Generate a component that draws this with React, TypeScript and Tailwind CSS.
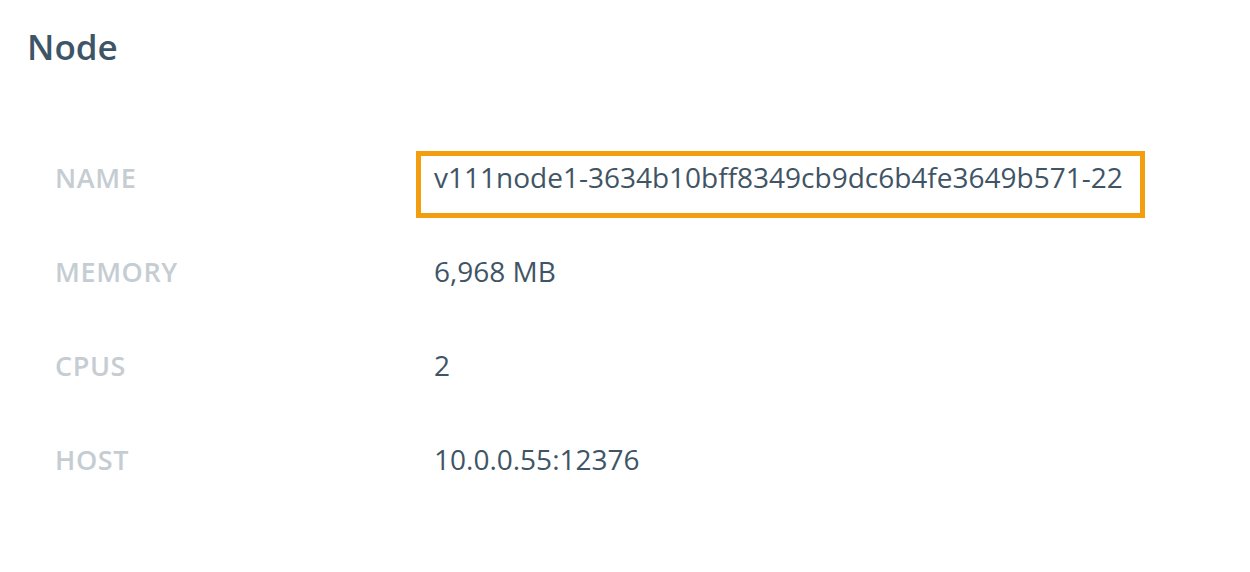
export default function App() {
  const rows = [
    { label: 'NAME', value: 'v111node1-3634b10bff8349cb9dc6b4fe3649b571-22', highlight: true },
    { label: 'MEMORY', value: '6,968 MB' },
    { label: 'CPUS', value: '2' },
    { label: 'HOST', value: '10.0.0.55:12376' },
  ];

  return (
    <div className="w-[1250px] h-[572px] bg-white overflow-hidden" style={{ fontFamily: '"Open Sans", "Liberation Sans", sans-serif' }}>
      <h1 className="pl-[27px] pt-[23px] text-[35px] leading-[48px] font-semibold text-[#3e5567]">Node</h1>
      <div className="mt-[80px] flex flex-col">
        {rows.map((row) => (
          <div key={row.label} className="h-[94px] flex items-start">
            <div className="w-[416px] pl-[55px] pt-[7px] text-[27px] leading-[40px] font-semibold tracking-[0.6px] text-[#c5cdd2]">
              {row.label}
            </div>
            {row.highlight ? (
              <div className="w-[729px] border-[5px] border-[#f29e0f] pt-[1px] pb-[16px] px-[13px] text-[28px] leading-[40px] text-[#3f5566] whitespace-nowrap">
                {row.value}
              </div>
            ) : (
              <div className="pt-[6px] pl-[18px] text-[28px] leading-[40px] text-[#3f5566]">{row.value}</div>
            )}
          </div>
        ))}
      </div>
    </div>
  );
}
